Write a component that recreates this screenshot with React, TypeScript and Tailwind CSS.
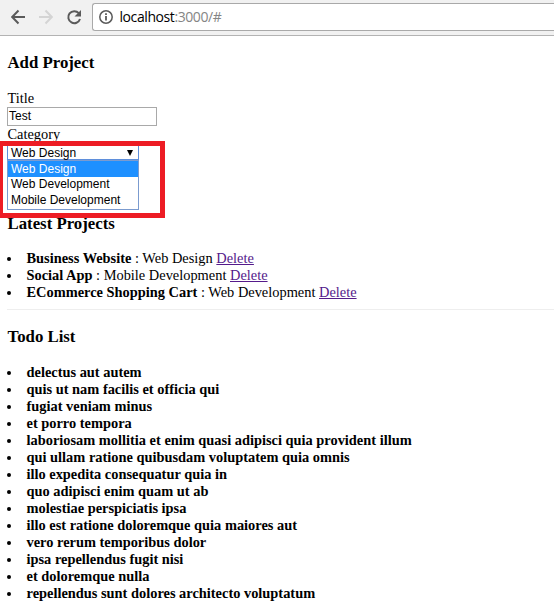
import React from "react";

const projects = [
  { title: "Business Website", category: "Web Design" },
  { title: "Social App", category: "Mobile Development" },
  { title: "ECommerce Shopping Cart", category: "Web Development" },
];

const todos = [
  "delectus aut autem",
  "quis ut nam facilis et officia qui",
  "fugiat veniam minus",
  "et porro tempora",
  "laboriosam mollitia et enim quasi adipisci quia provident illum",
  "qui ullam ratione quibusdam voluptatem quia omnis",
  "illo expedita consequatur quia in",
  "quo adipisci enim quam ut ab",
  "molestiae perspiciatis ipsa",
  "illo est ratione doloremque quia maiores aut",
  "vero rerum temporibus dolor",
  "ipsa repellendus fugit nisi",
  "et doloremque nulla",
  "repellendus sunt dolores architecto voluptatum",
];

function Toolbar() {
  return (
    <header className="flex h-9 items-start border-b border-[#b3b3b3] bg-[#f1f1f1] pt-[3px]">
      <div className="flex h-7 w-[92px] shrink-0 items-center">
        <svg className="ml-[11px] h-4 w-[14px]" viewBox="0 0 14 16" fill="none" stroke="#5a5a5a" strokeWidth="2">
          <path d="M14 8H1.5M7.5 1.5L1.2 8l6.3 6.5" />
        </svg>
        <svg className="ml-[14px] h-4 w-[14px]" viewBox="0 0 14 16" fill="none" stroke="#d4d4d4" strokeWidth="2">
          <path d="M0 8h12.5M6.5 1.5L12.8 8l-6.3 6.5" />
        </svg>
        <svg className="ml-[13px] h-4 w-4" viewBox="0 0 16 16">
          <path d="M12.8 4.2A6 6 0 1 0 14 10" fill="none" stroke="#5a5a5a" strokeWidth="2" />
          <path d="M15 1v6.5H8.5z" fill="#5a5a5a" />
        </svg>
      </div>
      <div className="flex h-7 flex-1 items-center rounded-l-[3px] border border-r-0 border-[#a9a9a9] bg-white pl-[6px]">
        <svg className="h-[14px] w-[14px]" viewBox="0 0 14 14" fill="none" stroke="#5a5a5a">
          <circle cx="7" cy="7" r="6.2" strokeWidth="1.5" />
          <path d="M7 6v4.5M7 3.3v1.6" strokeWidth="1.8" />
        </svg>
        <span className="ml-[6.5px] whitespace-pre font-['Open_Sans',sans-serif] text-[14px] leading-5 tracking-[-0.42px] text-black">
          localhost<span className="text-[#858585]">:3000/#</span>
        </span>
      </div>
    </header>
  );
}

function Item({ children }: { children: React.ReactNode }) {
  return (
    <li className="flex h-[17px] items-center whitespace-pre">
      <span className="mr-[15.5px] h-1 w-1 rounded-full bg-black" />
      <span>{children}</span>
    </li>
  );
}

function CategoryPicker() {
  return (
    <div className="relative h-[67px] font-['Liberation_Sans',sans-serif] text-[12px]">
      <div className="flex h-[17px] w-[132px] items-center justify-between border border-[#5f8fdb] bg-white pl-[3px] pr-[5px] pt-1">
        <span>Web Design</span>
        <svg className="mb-[2px] h-[6px] w-[6px]" viewBox="0 0 6 6">
          <path d="M0 0h6L3 6z" />
        </svg>
      </div>
      <div className="h-[50px] w-[132px] border border-[#7b9bcf] bg-white">
        <div className="h-4 bg-[#1e90ff] pl-[3px] leading-[17px] text-white">Web Design</div>
        <div className="h-[15px] pl-[3px] leading-[15px]">Web Development</div>
        <div className="pl-[3px] leading-[17px]">Mobile Development</div>
      </div>
      <div className="absolute -left-[7px] -top-[2px] h-[77px] w-[165px] border-[5px] border-l-[3px] border-[#ed1c24]" />
    </div>
  );
}

export default function App() {
  return (
    <div className="h-[602px] overflow-hidden bg-white font-['Liberation_Serif',serif] text-[14.4px] leading-[17px] text-black">
      <Toolbar />
      <main className="pl-[7px]">
        <h3 className="mt-[17px] h-5 pl-[0.5px] text-[16.8px] font-bold leading-5">Add Project</h3>
        <div className="mt-[17px] h-[17px] pl-[0.5px]">Title</div>
        <div className="flex h-[19px] w-[150px] items-center border border-[#a9a9a9] pl-px font-['Liberation_Sans',sans-serif] text-[12px]">
          Test
        </div>
        <div className="h-[17px] pl-[0.5px]">Category</div>
        <CategoryPicker />
        <h3 className="mt-[4px] h-5 pl-[0.5px] text-[16.8px] font-bold leading-5">Latest Projects</h3>
        <ul className="mt-4">
          {projects.map((p) => (
            <Item key={p.title}>
              <strong>{p.title}</strong> : {p.category} <a className="text-[#551a8b] underline">Delete</a>
            </Item>
          ))}
        </ul>
        <hr className="mt-2 border-t border-[#eeeeee]" />
        <h3 className="mt-[17px] h-5 pl-[0.5px] text-[16.8px] font-bold leading-5">Todo List</h3>
        <ul className="mt-[17px] font-bold">
          {todos.map((t) => (
            <Item key={t}>{t}</Item>
          ))}
        </ul>
      </main>
    </div>
  );
}
